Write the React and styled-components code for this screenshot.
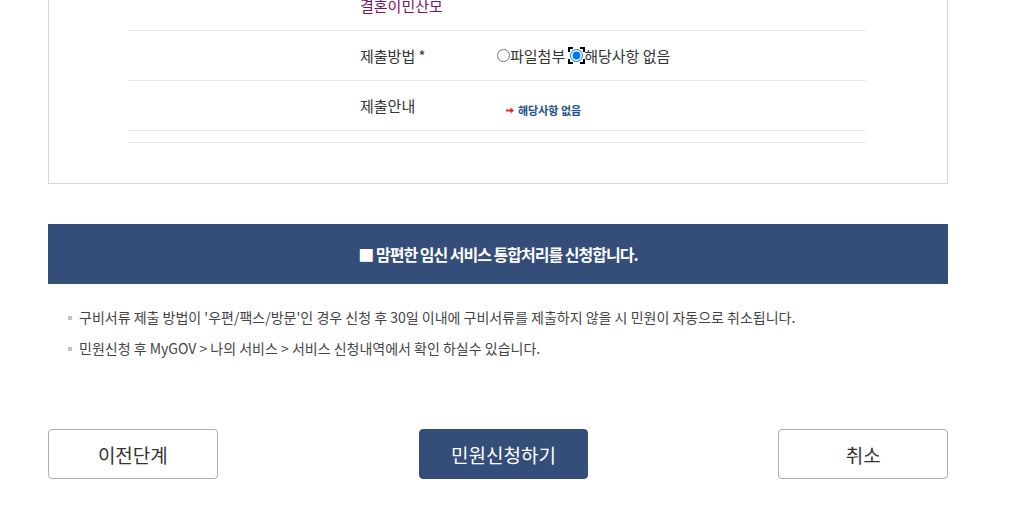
import React from 'react';
import styled, { createGlobalStyle } from 'styled-components';

const GlobalStyle = createGlobalStyle`
  html, body { margin: 0; padding: 0; background: #fff; }
  body {
    font-family: "Noto Sans CJK KR", "Noto Sans", sans-serif;
    color: #333;
    overflow: hidden;
  }
`;

const Page = styled.div`
  width: 900px;
  margin-left: 48px;
`;

const Panel = styled.div`
  margin-top: -20px;
  border: 1px solid #d6d6d6;
  padding: 0 81px 40px 79px;
`;

const Row = styled.div`
  box-sizing: border-box;
  height: 50px;
  border-bottom: 1px solid #e8e8e8;
  display: flex;
  align-items: center;
  padding-left: 232px;
`;

const Label = styled.div`
  width: 137px;
  font-size: 15px;
  color: ${p => p.$accent ? '#7a1463' : '#333'};
`;

const Value = styled.div`
  display: flex;
  align-items: center;
  font-size: 15px;
  color: #333;
`;

const Choice = styled.label`
  display: inline-flex;
  align-items: center;
  margin-right: 3px;
`;

const Radio = styled.input`
  width: 13px;
  height: 13px;
  margin: 0;
`;

const FocusRing = styled.span`
  display: inline-flex;
  align-items: center;
  justify-content: center;
  width: 17px;
  height: 17px;
  margin-right: -1px;
  background:
    linear-gradient(#000, #000) top left / 5px 2px no-repeat,
    linear-gradient(#000, #000) top left / 2px 5px no-repeat,
    linear-gradient(#000, #000) top right / 5px 2px no-repeat,
    linear-gradient(#000, #000) top right / 2px 5px no-repeat,
    linear-gradient(#000, #000) bottom left / 5px 2px no-repeat,
    linear-gradient(#000, #000) bottom left / 2px 5px no-repeat,
    linear-gradient(#000, #000) bottom right / 5px 2px no-repeat,
    linear-gradient(#000, #000) bottom right / 2px 5px no-repeat;
`;

const Guide = styled.a`
  display: inline-flex;
  align-items: center;
  gap: 4px;
  margin: 9px 0 0 9px;
  font-size: 11px;
  font-weight: 700;
  color: #22508c;
  text-decoration: none;
`;

const Divider = styled.div`
  margin-top: 11px;
  border-top: 1px solid #e8e8e8;
`;

const Banner = styled.div`
  margin-top: 40px;
  height: 60px;
  background: #344e79;
  color: #fff;
  display: flex;
  align-items: center;
  justify-content: center;
  font-size: 16px;
  font-weight: 700;
  letter-spacing: -1px;
`;

const Notes = styled.ul`
  list-style: none;
  margin: 0;
  padding: 18px 0 0 20px;
`;

const Note = styled.li`
  display: flex;
  align-items: center;
  line-height: 31px;
  font-size: 14px;
  color: #444;
  &::before {
    content: '';
    width: 4px;
    height: 4px;
    background: #c4c4c4;
    margin-right: 7px;
  }
`;

const Actions = styled.div`
  display: flex;
  margin-top: 65px;
`;

const Button = styled.button`
  box-sizing: border-box;
  width: 170px;
  height: 50px;
  border-radius: 4px;
  border: 1px solid ${p => p.$primary ? '#344e79' : '#acacac'};
  background: ${p => p.$primary ? '#344e79' : '#fff'};
  color: ${p => p.$primary ? '#fff' : '#333'};
  font-family: inherit;
  font-size: 19px;
  cursor: pointer;
  margin-left: ${p => p.$offset || '0'};
`;

const Arrow = () => (
  <svg width="8" height="7" viewBox="0 0 8 7">
    <path d="M0 2.5h4.5V0.5L8 3.5 4.5 6.5V4.5H0z" fill="#e0262b" />
  </svg>
);

export default function App() {
  return (
    <Page>
      <GlobalStyle />
      <Panel>
        <Row>
          <Label $accent>결혼이민산모</Label>
        </Row>
        <Row>
          <Label>제출방법 *</Label>
          <Value>
            <Choice>
              <Radio type="radio" name="method" />
              파일첨부
            </Choice>
            <Choice>
              <FocusRing>
                <Radio type="radio" name="method" defaultChecked />
              </FocusRing>
              해당사항 없음
            </Choice>
          </Value>
        </Row>
        <Row>
          <Label>제출안내</Label>
          <Value>
            <Guide href="#none">
              <Arrow />
              해당사항 없음
            </Guide>
          </Value>
        </Row>
        <Divider />
      </Panel>

      <Banner>■ 맘편한 임신 서비스 통합처리를 신청합니다.</Banner>

      <Notes>
        <Note>구비서류 제출 방법이 '우편/팩스/방문'인 경우 신청 후 30일 이내에 구비서류를 제출하지 않을 시 민원이 자동으로 취소됩니다.</Note>
        <Note>민원신청 후 MyGOV &gt; 나의 서비스 &gt; 서비스 신청내역에서 확인 하실수 있습니다.</Note>
      </Notes>

      <Actions>
        <Button>이전단계</Button>
        <Button $primary $offset="201px">민원신청하기</Button>
        <Button $offset="190px">취소</Button>
      </Actions>
    </Page>
  );
}
